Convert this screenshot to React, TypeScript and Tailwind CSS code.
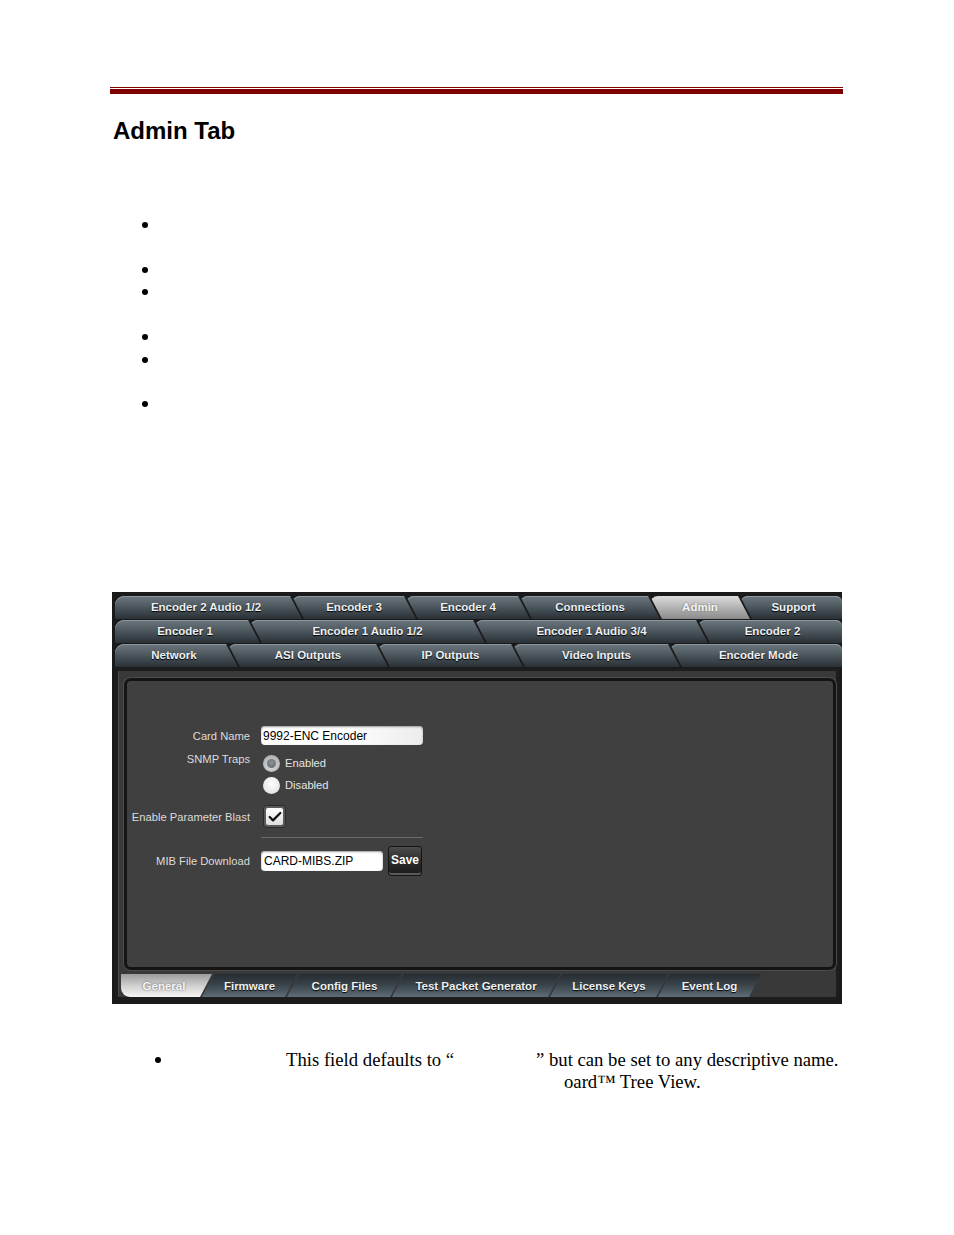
import { Check } from "lucide-react";

type Tab = { label: string; w: number; active?: boolean };

// top tab rows: "\" slanted right edge, neighbours overlap by 10px
const TOP_FIRST =
  "[clip-path:polygon(0_0,calc(100%_-_12px)_0,100%_100%,0_100%)] rounded-tl-[9px] pr-[5px]";
const TOP_MID =
  "[clip-path:polygon(0_0,calc(100%_-_12px)_0,100%_100%,12px_100%)] rounded-tl-[8px] ml-[-10px]";
const TOP_LAST =
  "[clip-path:polygon(0_0,100%_0,100%_100%,12px_100%)] rounded-tl-[8px] rounded-tr-[6px] ml-[-10px] pl-[5px]";

// bottom tab row: "/" slanted right edge
const BOT_FIRST =
  "[clip-path:polygon(0_0,100%_0,calc(100%_-_12px)_100%,0_100%)] rounded-bl-[9px] pr-[5px]";
const BOT_MID =
  "[clip-path:polygon(12px_0,100%_0,calc(100%_-_12px)_100%,0_100%)] ml-[-10px]";

const rows: Tab[][] = [
  [
    { label: "Encoder 2 Audio 1/2", w: 187 },
    { label: "Encoder 3", w: 124 },
    { label: "Encoder 4", w: 124 },
    { label: "Connections", w: 140 },
    { label: "Admin", w: 100, active: true },
    { label: "Support", w: 102 },
  ],
  [
    { label: "Encoder 1", w: 145 },
    { label: "Encoder 1 Audio 1/2", w: 235 },
    { label: "Encoder 1 Audio 3/4", w: 233 },
    { label: "Encoder 2", w: 144 },
  ],
  [
    { label: "Network", w: 123 },
    { label: "ASI Outputs", w: 160 },
    { label: "IP Outputs", w: 145 },
    { label: "Video Inputs", w: 167 },
    { label: "Encoder Mode", w: 172 },
  ],
];

const bottomTabs: Tab[] = [
  { label: "General", w: 91, active: true },
  { label: "Firmware", w: 95 },
  { label: "Config Files", w: 115 },
  { label: "Test Packet Generator", w: 168 },
  { label: "License Keys", w: 118 },
  { label: "Event Log", w: 103 },
];

function TopRow({ tabs, className }: { tabs: Tab[]; className?: string }) {
  return (
    <div className={`flex h-[23px] px-[3px] ${className ?? ""}`}>
      {tabs.map((t, i) => {
        const shape = i === 0 ? TOP_FIRST : i === tabs.length - 1 ? TOP_LAST : TOP_MID;
        const skin = t.active
          ? "bg-linear-to-b from-[#dcdcdc] via-[#b4b4b4] to-[#8a8a8a] text-[#f4f4f4] [text-shadow:0_0_2px_#666]"
          : "bg-linear-to-b from-[#6c777f] via-[#4a555c] to-[#2a3137] text-[#eef0f2] [text-shadow:0_1px_1px_#000] shadow-[inset_0_1px_0_#8c969d]";
        return (
          <div
            key={t.label}
            style={{ width: t.w }}
            className={`flex-none flex items-center justify-center pt-px text-[11.5px] font-bold whitespace-nowrap ${shape} ${skin}`}
          >
            {t.label}
          </div>
        );
      })}
    </div>
  );
}

function BottomRow() {
  return (
    <div className="flex h-[23px] mt-[4px] pl-[3px]">
      {bottomTabs.map((t, i) => {
        const shape = i === 0 ? BOT_FIRST : BOT_MID;
        const skin = t.active
          ? "bg-linear-to-b from-[#9c9c9c] via-[#cfcfcf] to-[#f6f6f6] text-[#f6f6f6] [text-shadow:0_0_2px_#555]"
          : "bg-linear-to-b from-[#262d32] via-[#3b454c] to-[#5f6d77] text-[#eef0f2] [text-shadow:0_1px_1px_#000]";
        return (
          <div
            key={t.label}
            style={{ width: t.w }}
            className={`flex-none flex items-center justify-center pt-[3px] text-[11.5px] font-bold whitespace-nowrap ${shape} ${skin}`}
          >
            {t.label}
          </div>
        );
      })}
    </div>
  );
}

function Label({ children, className }: { children: React.ReactNode; className?: string }) {
  return (
    <div
      className={`w-[124px] flex-none pr-px text-right text-[11.2px] leading-[14px] text-[#dcdcdc] whitespace-nowrap ${className ?? ""}`}
    >
      {children}
    </div>
  );
}

function Radio({ on, label }: { on?: boolean; label: string }) {
  return (
    <div className="flex items-center h-[22px]">
      <div
        className={`ml-[2px] w-[17px] h-[17px] rounded-full flex items-center justify-center ${
          on
            ? "bg-[radial-gradient(circle_at_50%_60%,#e6e6e6,#9a9a9a)]"
            : "bg-[radial-gradient(circle_at_50%_40%,#ffffff,#dcdcdc)]"
        }`}
      >
        {on && (
          <div className="w-[9px] h-[9px] rounded-full bg-[radial-gradient(circle_at_50%_40%,#8d9498,#5d6468)]" />
        )}
      </div>
      <span className="ml-[5px] text-[11.2px] text-[#e4e4e4]">{label}</span>
    </div>
  );
}

function AdminForm() {
  return (
    <div className="pt-[45px] font-['Liberation_Sans',Arial,sans-serif]">
      {/* Card Name */}
      <div className="flex items-center h-[19px]">
        <Label>Card Name</Label>
        <div className="ml-[10px] w-[162px] h-[19px] rounded-[4px] bg-linear-to-r from-[#ffffff] via-[#ffffff] to-[#ececec] shadow-[inset_0_1px_2px_#9a9a9a] flex items-center pl-[2px] text-[12px] text-black">
          9992-ENC Encoder
        </div>
      </div>

      {/* SNMP Traps */}
      <div className="flex mt-[7px]">
        <Label>SNMP Traps</Label>
        <div className="ml-[10px] flex flex-col">
          <Radio on label="Enabled" />
          <Radio label="Disabled" />
        </div>
      </div>

      {/* Enable Parameter Blast */}
      <div className="flex items-center h-[23px] mt-[9px]">
        <Label>Enable Parameter Blast</Label>
        <div className="ml-[12px] w-[23px] h-[23px] rounded-[4px] bg-[#5a5a5a] p-[3px] shadow-[inset_0_0_0_1px_#2a2a2a]">
          <div className="w-full h-full rounded-[2px] bg-linear-to-b from-[#ffffff] to-[#dedede] flex items-center justify-center">
            <Check size={16} strokeWidth={3.4} color="#111" />
          </div>
        </div>
      </div>

      {/* divider */}
      <div className="ml-[134px] mt-[9px] w-[162px] h-px bg-[#6a6a6a]" />

      {/* MIB File Download */}
      <div className="flex items-center h-[30px] mt-[8px]">
        <Label>MIB File Download</Label>
        <div className="ml-[10px] w-[122px] h-[20px] rounded-[4px] bg-white shadow-[inset_0_1px_2px_#9a9a9a] flex items-center pl-[3px] text-[12px] text-black">
          CARD-MIBS.ZIP
        </div>
        <div className="ml-[5px] w-[34px] h-[30px] rounded-[3px] border border-[#151515] bg-linear-to-b from-[#4c4c4c] via-[#2c2c2c] to-[#1c1c1c] shadow-[inset_0_-2px_0_#5a5a5a] flex justify-center pt-[4px] text-[12px] font-bold text-white">
          Save
        </div>
      </div>
    </div>
  );
}

function Screenshot() {
  return (
    <div className="ml-[2px] mt-[177px] w-[730px] h-[412px] bg-[#1a1a1a] pt-[4px] pb-[4px] flex flex-col font-['Liberation_Sans',Arial,sans-serif]">
      <TopRow tabs={rows[0]} />
      <TopRow tabs={rows[1]} className="mt-px" />
      <TopRow tabs={rows[2]} className="mt-px" />

      <div className="mt-px mx-[3px] flex-1 bg-[#393939] border-[3px] border-[#1d1d1d] rounded-b-[4px] shadow-[inset_1px_0_0_#4a4a4a] flex flex-col pl-[6px] pt-[7px]">
        <div className="h-[292px] flex-none rounded-[7px] border-[3px] border-[#141414] bg-[#404040] shadow-[0_0_0_1px_#4c4c4c]">
          <AdminForm />
        </div>
        <div className="-ml-[6px]">
          <BottomRow />
        </div>
      </div>
    </div>
  );
}

const bulletRows = [45, 22, 45, 23, 44, 22];

export default function App() {
  return (
    <div className="w-[954px] h-[1235px] bg-white pl-[110px] pt-[87px] overflow-hidden">
      {/* red header rule */}
      <div className="w-[733px] h-px bg-[#800000]" />
      <div className="w-[733px] h-[5px] mt-px bg-[#800000]" />

      <h1 className="ml-[3px] mt-[25px] text-[24px] leading-[24px] font-bold text-black font-['Liberation_Sans',Arial,sans-serif]">
        Admin Tab
      </h1>

      {/* bullet list (text is white in the source) */}
      <div className="mt-[71px] flex flex-col">
        {bulletRows.map((h, i) => (
          <div key={i} style={{ height: h }} className="flex">
            <div className="ml-[32px] mt-[8px] w-[6px] h-[6px] rounded-full bg-black" />
          </div>
        ))}
      </div>

      <Screenshot />

      <div className="mt-[45px] font-['Liberation_Serif','Times_New_Roman',serif] text-[18.7px] leading-[22px] text-black">
        <div className="flex items-start h-[22px]">
          <div className="ml-[45px] mt-[8px] w-[6px] h-[6px] flex-none rounded-full bg-black" />
          <div className="ml-[125px] w-[250px] flex-none whitespace-nowrap">This field defaults to “</div>
          <div className="whitespace-nowrap">” but can be set to any descriptive name.</div>
        </div>
        <div className="ml-[454px] whitespace-nowrap">oard™ Tree View.</div>
      </div>
    </div>
  );
}
